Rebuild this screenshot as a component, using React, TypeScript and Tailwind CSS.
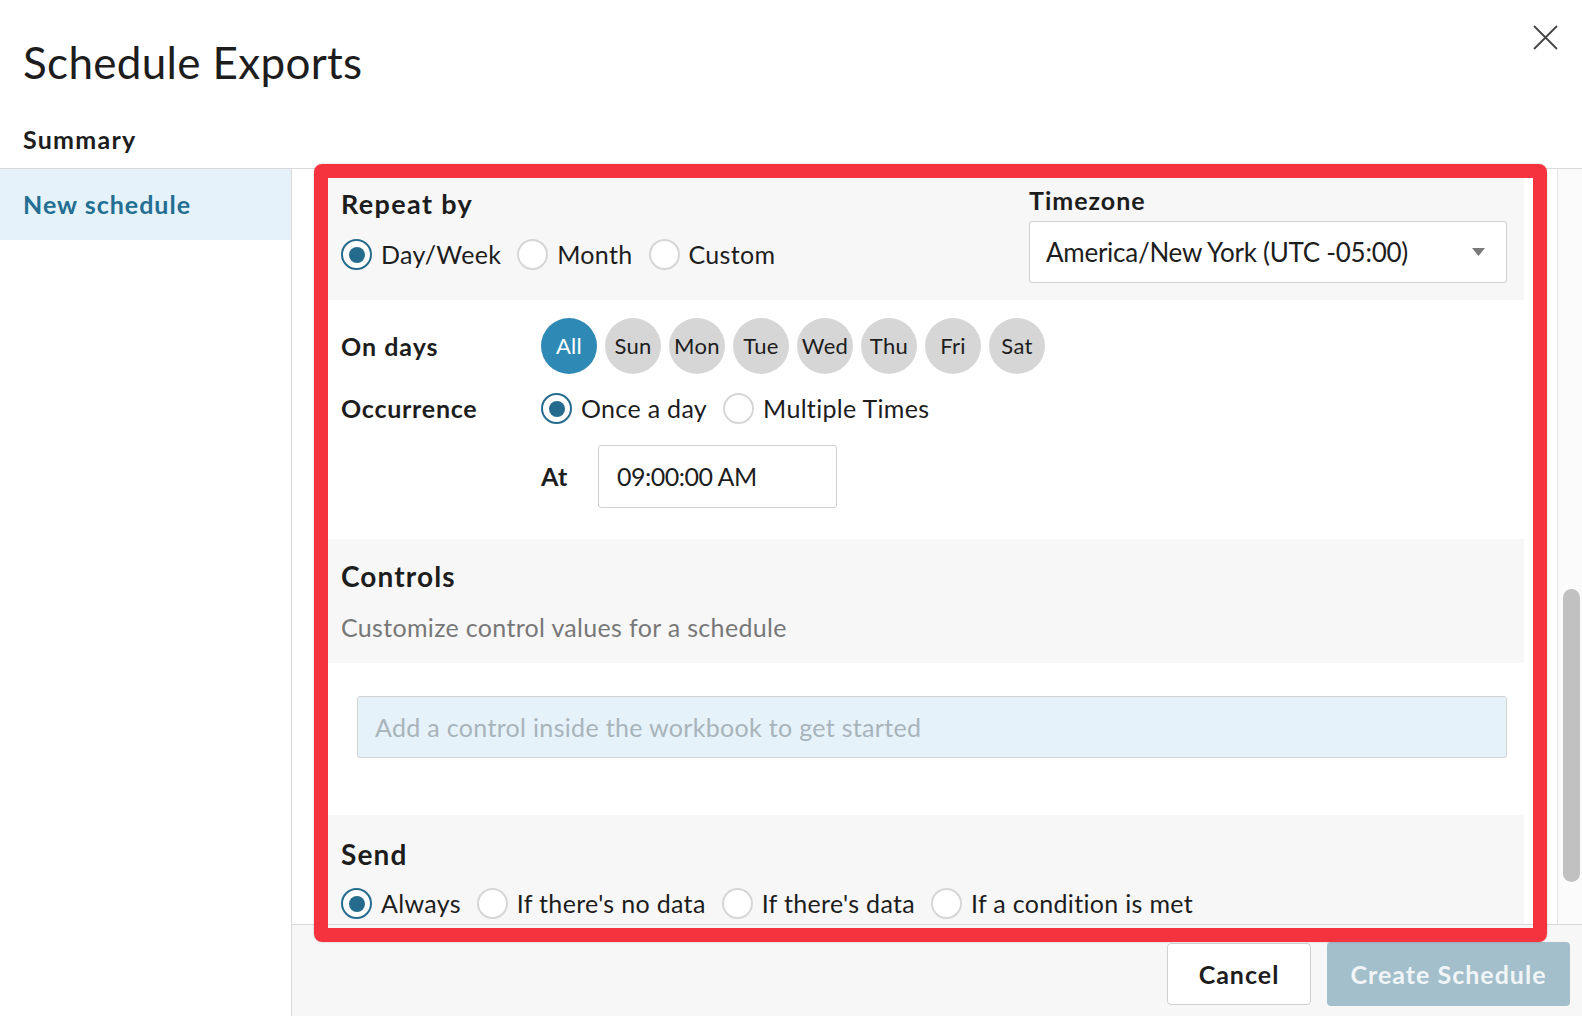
import React from 'react';

const Radio = ({ checked, label }: { checked?: boolean; label: string }) => (
  <label className="flex items-center gap-[9px]">
    <span
      className={`flex h-[31px] w-[31px] shrink-0 items-center justify-center rounded-full border-[2.5px] bg-white ${
        checked ? 'border-[#246b8e]' : 'border-[#d6d6d6]'
      }`}
    >
      {checked && <span className="h-[16px] w-[16px] rounded-full bg-[#246b8e]" />}
    </span>
    <span className="text-[25px] leading-none text-[#1d1d1d]">{label}</span>
  </label>
);

const days = ['All', 'Sun', 'Mon', 'Tue', 'Wed', 'Thu', 'Fri', 'Sat'];

const App: React.FC = () => {
  return (
    <div
      className="relative flex h-[1016px] w-[1582px] flex-col overflow-hidden bg-white tracking-[0.02em] text-[#1d1d1d]"
      style={{ fontFamily: 'Lato, "Noto Sans", sans-serif' }}
    >
      {/* Header */}
      <div className="h-[169px] shrink-0 border-b border-[#d9d9d9] pl-[23px] pr-[24px] pt-[25px]">
        <div className="flex items-start justify-between">
          <h1 className="mt-[15px] text-[44px] font-normal leading-none">Schedule Exports</h1>
          <svg width="25" height="25" viewBox="0 0 25 25" className="text-[#444]">
            <path d="M1 1 L24 24 M24 1 L1 24" stroke="currentColor" strokeWidth="1.8" fill="none" />
          </svg>
        </div>
        <div className="mt-[43px] text-[25px] font-bold leading-none tracking-[0.05em]">Summary</div>
      </div>

      <div className="flex min-h-0 flex-1">
        {/* Sidebar */}
        <div className="w-[292px] shrink-0 border-r border-[#d9d9d9]">
          <div className="flex h-[71px] items-center bg-[#e5f2f9] pl-[23px] text-[25px] font-bold leading-none tracking-[0.04em] text-[#236e93]">
            New schedule
          </div>
        </div>

        {/* Main */}
        <div className="flex min-w-0 flex-1 flex-col">
          <div className="flex min-h-0 flex-1">
            <div className="min-w-0 flex-1 overflow-hidden pl-[32px] pr-[33px]">
              {/* Repeat by */}
              <section className="flex justify-between bg-[#f7f7f7] px-[17px] pb-[17px] pt-[19px]">
                <div className="mt-[2px]">
                  <h2 className="text-[27px] font-bold leading-none tracking-[0.05em]">Repeat by</h2>
                  <div className="mt-[22px] flex items-center gap-[16px]">
                    <Radio checked label="Day/Week" />
                    <Radio label="Month" />
                    <Radio label="Custom" />
                  </div>
                </div>
                <div className="w-[478px]">
                  <div className="text-[25px] font-bold leading-none tracking-[0.04em]">Timezone</div>
                  <div className="mt-[8px] flex h-[62px] items-center justify-between rounded-[3px] border border-[#d0d0d0] bg-white pl-[16px] pr-[21px]">
                    <span className="text-[26px] leading-none tracking-[-0.01em]">America/New York (UTC -05:00)</span>
                    <svg width="13" height="9" viewBox="0 0 13 9">
                      <path d="M0 0 H13 L6.5 8 Z" fill="#7a7a7a" />
                    </svg>
                  </div>
                </div>
              </section>

              {/* Day / week details */}
              <section className="px-[17px] pb-[31px] pt-[18px]">
                <div className="flex h-[56px] items-center">
                  <div className="w-[200px] text-[25px] font-bold leading-none tracking-[0.04em]">On days</div>
                  <div className="flex gap-[8px]">
                    {days.map((d, i) => (
                      <span
                        key={d}
                        className={`flex h-[56px] w-[56px] items-center justify-center rounded-full text-[22px] leading-none ${
                          i === 0 ? 'bg-[#2e89b5] text-white' : 'bg-[#d6d6d6] text-[#1d1d1d]'
                        }`}
                      >
                        {d}
                      </span>
                    ))}
                  </div>
                </div>
                <div className="mt-[19px] flex h-[31px] items-center">
                  <div className="w-[200px] text-[25px] font-bold leading-none tracking-[0.03em]">Occurrence</div>
                  <div className="flex items-center gap-[16px]">
                    <Radio checked label="Once a day" />
                    <Radio label="Multiple Times" />
                  </div>
                </div>
                <div className="mt-[21px] flex h-[63px] items-center pl-[200px]">
                  <div className="w-[57px] text-[25px] font-bold leading-none">At</div>
                  <div className="flex h-[63px] w-[239px] items-center rounded-[3px] border border-[#d0d0d0] bg-white pl-[18px] text-[25px] leading-none tracking-[-0.02em]">
                    09:00:00 AM
                  </div>
                </div>
              </section>

              {/* Controls */}
              <section className="bg-[#f7f7f7] px-[17px] pb-[23px] pt-[23px]">
                <h2 className="text-[28px] font-bold leading-none tracking-[0.04em]">Controls</h2>
                <p className="mt-[25px] text-[25px] leading-none text-[#777]">
                  Customize control values for a schedule
                </p>
              </section>
              <section className="pb-[57px] pl-[33px] pr-[17px] pt-[33px]">
                <div className="flex h-[62px] items-center rounded-[3px] border border-[#d3d3d3] bg-[#e5f2f9] pl-[17px] text-[25px] leading-none text-[#a8b4bb]">
                  Add a control inside the workbook to get started
                </div>
              </section>

              {/* Send */}
              <section className="bg-[#f7f7f7] px-[17px] pb-[24px] pt-[25px]">
                <h2 className="text-[28px] font-bold leading-none tracking-[0.04em]">Send</h2>
                <div className="mt-[20px] flex items-center gap-[16px]">
                  <Radio checked label="Always" />
                  <Radio label="If there's no data" />
                  <Radio label="If there's data" />
                  <Radio label="If a condition is met" />
                </div>
              </section>
            </div>

            {/* Scrollbar */}
            <div className="w-[25px] shrink-0 border-l border-[#e6e6e6] bg-[#fbfbfb] pl-[5px] pt-[420px]">
              <div className="h-[293px] w-[17px] rounded-full bg-[#c1c1c1]" />
            </div>
          </div>

          {/* Footer */}
          <div className="flex h-[92px] shrink-0 items-start justify-end gap-[16px] border-t border-[#d9d9d9] bg-[#f7f7f7] pr-[12px] pt-[18px]">
            <button className="h-[62px] w-[144px] rounded-[4px] border border-[#d0d0d0] bg-white text-[25px] font-bold leading-none tracking-[0.04em] text-[#1d1d1d]">
              Cancel
            </button>
            <button className="-mt-[1px] h-[64px] w-[243px] rounded-[4px] bg-[#a3bfcb] text-[25px] font-bold leading-none tracking-[0.04em] text-[#f1f5f7]">
              Create Schedule
            </button>
          </div>
        </div>
      </div>

      {/* Highlight annotation */}
      <div className="pointer-events-none absolute left-[314px] top-[164px] h-[778px] w-[1233px] rounded-[8px] border-[14px] border-[#f5333f] shadow-[0_0_2px_rgba(0,0,0,0.25)]" />
    </div>
  );
};

export default App;
